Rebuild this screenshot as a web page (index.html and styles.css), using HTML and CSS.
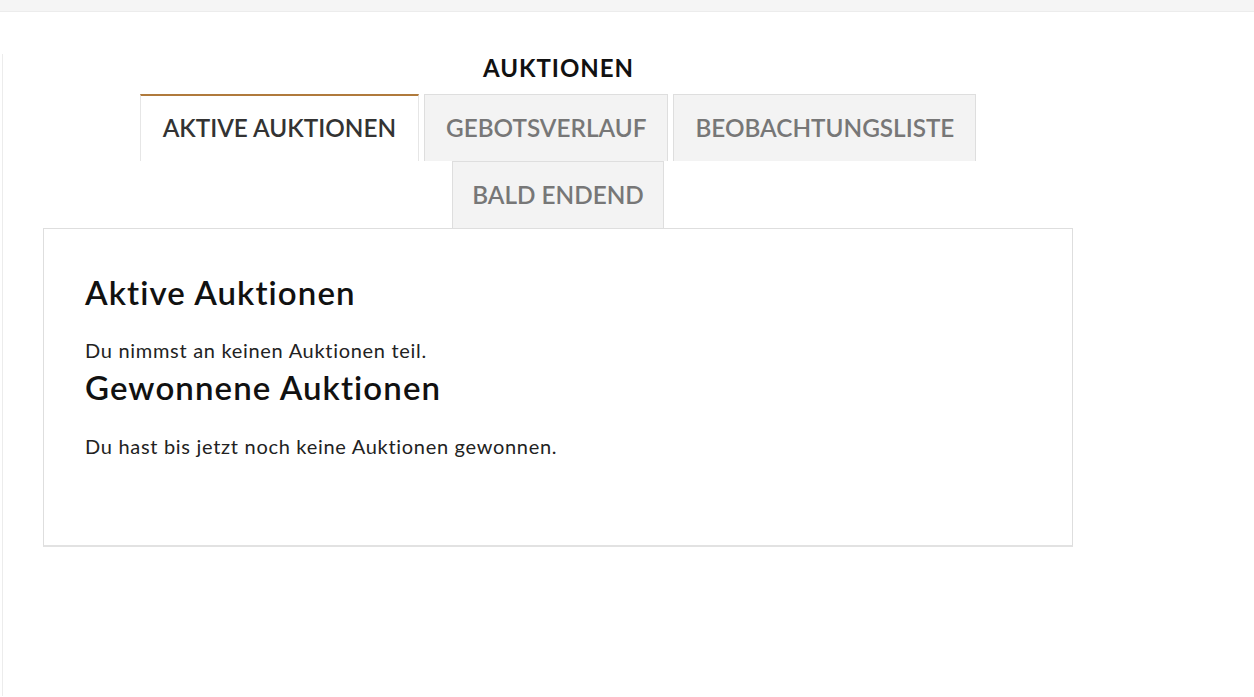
FILE: index.html
```html
<!DOCTYPE html>
<html lang="de">
<head>
<meta charset="utf-8">
<title>Auktionen</title>
<link rel="stylesheet" href="styles.css">
</head>
<body>
<div class="topbar"></div>
<div class="page">
  <div class="wrap">
    <h1 class="title">AUKTIONEN</h1>
    <nav class="tabs">
      <a class="tab active">AKTIVE AUKTIONEN</a>
      <a class="tab">GEBOTSVERLAUF</a>
      <a class="tab">BEOBACHTUNGSLISTE</a>
      <a class="tab">BALD ENDEND</a>
    </nav>
    <section class="panel">
      <h2>Aktive Auktionen</h2>
      <p>Du nimmst an keinen Auktionen teil.</p>
      <h2 class="second">Gewonnene Auktionen</h2>
      <p>Du hast bis jetzt noch keine Auktionen gewonnen.</p>
    </section>
  </div>
</div>
</body>
</html>
```
FILE: styles.css
```css
* { box-sizing: border-box; }
html, body { margin: 0; padding: 0; background: #fff; }
body {
  font-family: Lato, "Open Sans", "Liberation Sans", sans-serif;
  color: #222;
  font-variant-ligatures: none;
}

.topbar { height: 12px; background: #f5f5f5; border-bottom: 1px solid #ececec; }

.page {
  margin-top: 42px;
  margin-left: 2px;
  border-left: 1px solid #ececec;
  min-height: 642px;
}

.wrap { padding-left: 40px; width: 1071px; }

.title {
  margin: 0;
  text-align: center;
  font-size: 24px;
  font-weight: 700;
  letter-spacing: 1px;
  color: #111;
  line-height: 28px;
  height: 40px;
}

.tabs {
  display: flex;
  flex-wrap: wrap;
  justify-content: center;
  column-gap: 5px;
  width: 1030px;
  padding: 0 80px;
}

.tab {
  display: block;
  height: 67px;
  line-height: 66px;
  padding: 0 21px;
  font-size: 24.3px;
  font-weight: 600;
  color: #777;
  background: #f3f3f3;
  border: 1px solid #dedede;
  border-bottom: none;
  text-decoration: none;
}

.tab.active {
  background: #fff;
  color: #333;
  border-top: 2px solid #b07a3c;
  border-left: 1px solid #e6e6e6;
  border-right: 1px solid #e6e6e6;
  line-height: 64px;
  padding: 0 22px;
}

.tab:last-child { padding: 0 19px; }

.panel {
  width: 1030px;
  height: 319px;
  border: 1px solid #dedede;
  border-bottom: 2px solid #e2e2e2;
  padding: 41px 41px 0 41px;
}

.panel h2 {
  margin: 0;
  font-size: 33px;
  letter-spacing: 1.1px;
  font-weight: 600;
  color: #111;
  line-height: 44px;
}

.panel p {
  margin: 24px 0 0 0;
  font-size: 20px;
  letter-spacing: 0.7px;
  line-height: 24px;
  color: #222;
}

.panel h2.second { margin-top: 3px; }
.panel h2.second + p { margin-top: 25px; }
```
